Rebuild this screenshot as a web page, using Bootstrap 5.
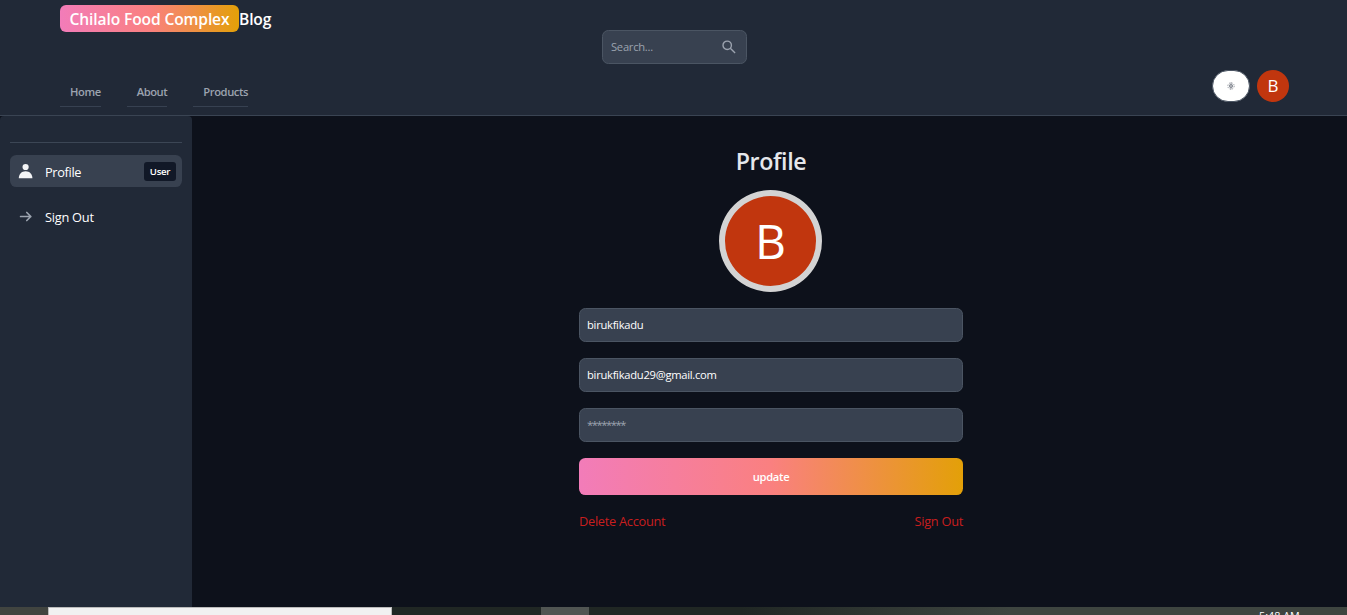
<!DOCTYPE html>
<html lang="en" data-bs-theme="dark">
<head>
<meta charset="utf-8">
<meta name="viewport" content="width=device-width, initial-scale=1">
<title>Profile - Chilalo Food Complex Blog</title>
<link href="https://cdn.jsdelivr.net/npm/bootstrap@5.3.0/dist/css/bootstrap.min.css" rel="stylesheet">
<style>
body{font-family:"Open Sans","Noto Sans",sans-serif;font-size:11.2px;line-height:16px;background:#0d111b;height:615px;overflow:hidden;color:#fff}
a{text-decoration:none;color:inherit}
.site-head{height:116px;background:#212937;border-bottom:1px solid #3a4453;padding:5px 58px 0 60px}
.brand{font-size:15.6px;line-height:29px;font-weight:600;height:25px;white-space:nowrap;letter-spacing:-.13px}
.brand a{display:flex}
.brand-pill{width:179px;height:27px;border-radius:6px;text-align:center;background:linear-gradient(90deg,#f27cb9,#fa8080 50%,#e3a008)}
.field{height:34px;background:#384150;border:1px solid #4b5563;border-radius:6.4px;padding:0 8px;font-size:11.2px;letter-spacing:-.27px;color:#fff}
.field:focus{background:#384150;color:#fff}
.field::placeholder{color:#9ca3af;opacity:1;letter-spacing:-1.4px}
input.field{padding:0 7px 2px}
.search-box{width:145px;color:#9ca3af}
.menu-link{font-weight:600;color:#9ca3af;padding:6px 0 6px 10px;height:31px;line-height:20px;border-bottom:1px solid #374151;white-space:nowrap;letter-spacing:-.42px}
.theme-btn{width:38px;height:32px;border-radius:16px;background:#fff;border:1px solid #4b5563}
.avatar-sm{width:32px;height:32px;background:#c1360e;font-size:17px}
.side{width:192px;background:#212937;padding:26px 10px;border-radius:4px 4px 0 0}
.side-item{height:32px;border-radius:6.4px;padding:0 6px 0 8px;font-size:12.8px;letter-spacing:-.25px}
.side-item.current{background:#384150}
.side-item.current>span:first-of-type{padding-top:2px;letter-spacing:-.35px}
.side-item svg{width:16px;margin-right:11px}
.role{background:#111827;border-radius:3px;width:32px;height:19px;line-height:19px;font-size:9.6px;font-weight:600;text-align:center}
.profile-form{width:384px;margin-left:387px;padding-top:32px}
.title{font-size:23.2px;line-height:26px;font-weight:600;color:#e5e7eb;letter-spacing:-.35px}
.avatar-lg{width:103px;height:102px;border:6px solid #d3d3d3;background:#c1360e;font-size:48px;margin:16px 141px 16px 140px}
.update{height:37px;border:0;border-radius:6.4px;background:linear-gradient(90deg,#f27cb9,#fa8080 50%,#e3a008);color:#fff;font-size:11.2px;font-weight:600;letter-spacing:-.3px}
.danger-row{color:#c81e1e;font-size:12.8px;letter-spacing:-.28px;margin-top:2px}
.taskbar{height:8px;background:linear-gradient(90deg,#202724 0,#202724 55%,#3e4540 75%,#3e4540)}
.task-start{width:48px;background:#414440}
.task-search{width:344px;background:#f1f1f1;border:1px solid #bbb;border-bottom:0}
.task-app{width:48px;margin-left:149px;background:#505552}
.clock{margin-left:670px;font-size:10.8px;line-height:14px;height:8px;padding-top:2px}
</style>
</head>
<body class="d-flex flex-column">
<header class="site-head flex-shrink-0">
  <div class="brand"><a href="#"><span class="brand-pill">Chilalo Food Complex</span>Blog</a></div>
  <form class="search-box field d-flex align-items-center justify-content-between mx-auto">
    <span>Search...</span>
    <svg width="18" height="16" viewBox="0 0 18 16" fill="none" stroke="currentColor" stroke-width="1.4"><circle cx="7.2" cy="6.300" r="4.200"/><path d="m10.300 9.300 4.800 4.700"/></svg>
  </form>
  <div class="d-flex justify-content-between">
    <nav class="d-flex" style="gap:26px;padding-top:12px">
      <a class="menu-link" href="#">Home</a><a class="menu-link" href="#">About</a><a class="menu-link" href="#">Products</a>
    </nav>
    <div class="d-flex" style="gap:7px;padding-top:6px">
      <button class="theme-btn p-0 d-flex align-items-center justify-content-center" aria-label="Theme"><svg width="8" height="8" viewBox="0 0 8 8" fill="none" stroke="#7d838d" stroke-width=".8"><circle cx="4" cy="4" r="1.700"/><circle cx="4" cy="4" r="3.200" stroke-dasharray="1.300 1.210"/><path d="M4 .5v7M2 4h4"/></svg></button>
      <div class="avatar-sm rounded-circle d-flex align-items-center justify-content-center">B</div>
    </div>
  </div>
</header>
<div class="d-flex flex-grow-1">
  <aside class="side flex-shrink-0">
    <div style="border-top:1px solid #3c4655;margin-bottom:12px"></div>
    <a href="#" class="side-item current d-flex align-items-center">
      <svg height="16" viewBox="0 0 16 16" fill="#f3f4f6"><circle cx="7.600" cy="4" r="3.100"/><path d="M.8 15.200c0-4.200 2.800-7 6.800-7s6.800 2.800 6.800 7z"/></svg>
      <span>Profile</span><span class="role ms-auto">User</span>
    </a>
    <a href="#" class="side-item d-flex align-items-center" style="margin-top:14px">
      <svg height="16" viewBox="0 0 16 16" fill="none" stroke="#9ca3af" stroke-width="1.700" stroke-linecap="round" stroke-linejoin="round"><path d="M2.600 7.500h10.200M8.800 3.500l4 4-4 4"/></svg>
      <span>Sign Out</span>
    </a>
  </aside>
  <main class="profile-form">
    <h1 class="title text-center mb-0">Profile</h1>
    <div class="avatar-lg rounded-circle d-flex align-items-center justify-content-center">B</div>
    <form class="d-flex flex-column gap-3">
      <input class="form-control field" value="birukfikadu" aria-label="Username">
      <input class="form-control field" value="birukfikadu29@gmail.com" aria-label="Email">
      <input class="form-control field" placeholder="********" aria-label="Password">
      <button class="update w-100" type="button">update</button>
      <div class="danger-row d-flex justify-content-between"><span>Delete Account</span><span>Sign Out</span></div>
    </form>
  </main>
</div>
<footer class="taskbar flex-shrink-0 d-flex overflow-hidden">
  <div class="task-start"></div><div class="task-search"></div><div class="task-app"></div><div class="clock text-nowrap">5:48 AM</div>
</footer>
<script src="https://cdn.jsdelivr.net/npm/bootstrap@5.3.0/dist/js/bootstrap.bundle.min.js"></script>
</body>
</html>
